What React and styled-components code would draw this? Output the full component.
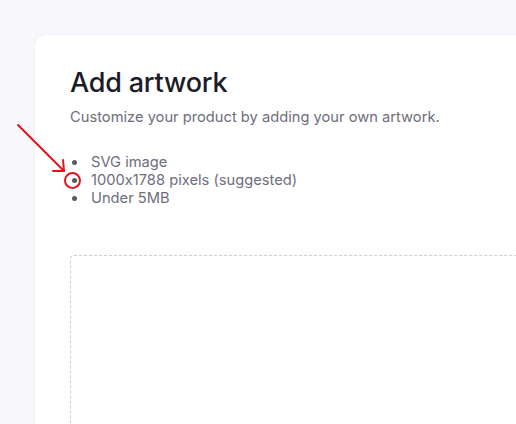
import React from 'react';
import styled, { createGlobalStyle } from 'styled-components';

const GlobalStyle = createGlobalStyle`
  html, body {
    margin: 0;
    padding: 0;
    background: #f8f8fc;
    overflow: hidden;
  }
  body {
    font-family: "Inter", "Noto Sans", sans-serif;
    font-feature-settings: "calt" 0;
  }
`;

const Page = styled.div`
  position: relative;
  width: 516px;
  height: 424px;
  padding: 35px 0 0 35px;
  box-sizing: border-box;
  overflow: hidden;
`;

const Card = styled.section`
  width: 560px;
  min-height: 460px;
  box-sizing: border-box;
  padding: 30px 35px;
  background: #ffffff;
  border-radius: 12px;
  box-shadow: 0 0 12px rgba(80, 80, 160, 0.05);
`;

const Title = styled.h1`
  margin: 0;
  font-size: 27px;
  line-height: 36px;
  font-weight: 500;
  color: #1c1c28;
  letter-spacing: -0.2px;
`;

const Subtitle = styled.p`
  margin: 6px 0 0;
  font-size: 14.7px;
  line-height: 20px;
  color: #6e6e7c;
`;

const Specs = styled.ul`
  margin: 26px 0 0;
  padding: 0;
  list-style: none;
  font-size: 14.7px;
  line-height: 18px;
  color: #6e6e7c;
`;

const Spec = styled.li`
  display: flex;
  align-items: center;

  &::before {
    content: "";
    width: 5px;
    height: 5px;
    margin: 0 14px 0 2px;
    border-radius: 50%;
    background: #5a5a5a;
  }
`;

const DropZone = styled.div`
  margin-top: 48px;
  height: 240px;
  border: 1px dashed #cfcfcf;
  border-radius: 4px;
`;

const Annotation = styled.svg`
  position: absolute;
  left: 0;
  top: 0;
  pointer-events: none;
`;

export default function App() {
  return (
    <>
      <GlobalStyle />
      <Page>
        <Card>
          <Title>Add artwork</Title>
          <Subtitle>Customize your product by adding your own artwork.</Subtitle>
          <Specs>
            <Spec>SVG image</Spec>
            <Spec>1000x1788 pixels (suggested)</Spec>
            <Spec>Under 5MB</Spec>
          </Specs>
          <DropZone />
        </Card>
        <Annotation width="516" height="424" viewBox="0 0 516 424">
          <g stroke="#e3141c" strokeWidth="2" fill="none" strokeLinecap="round">
            <line x1="18" y1="125" x2="64" y2="171" />
            <polyline points="63,160 64,171 53,171" />
            <circle cx="72.5" cy="180.5" r="7.5" />
          </g>
        </Annotation>
      </Page>
    </>
  );
}
